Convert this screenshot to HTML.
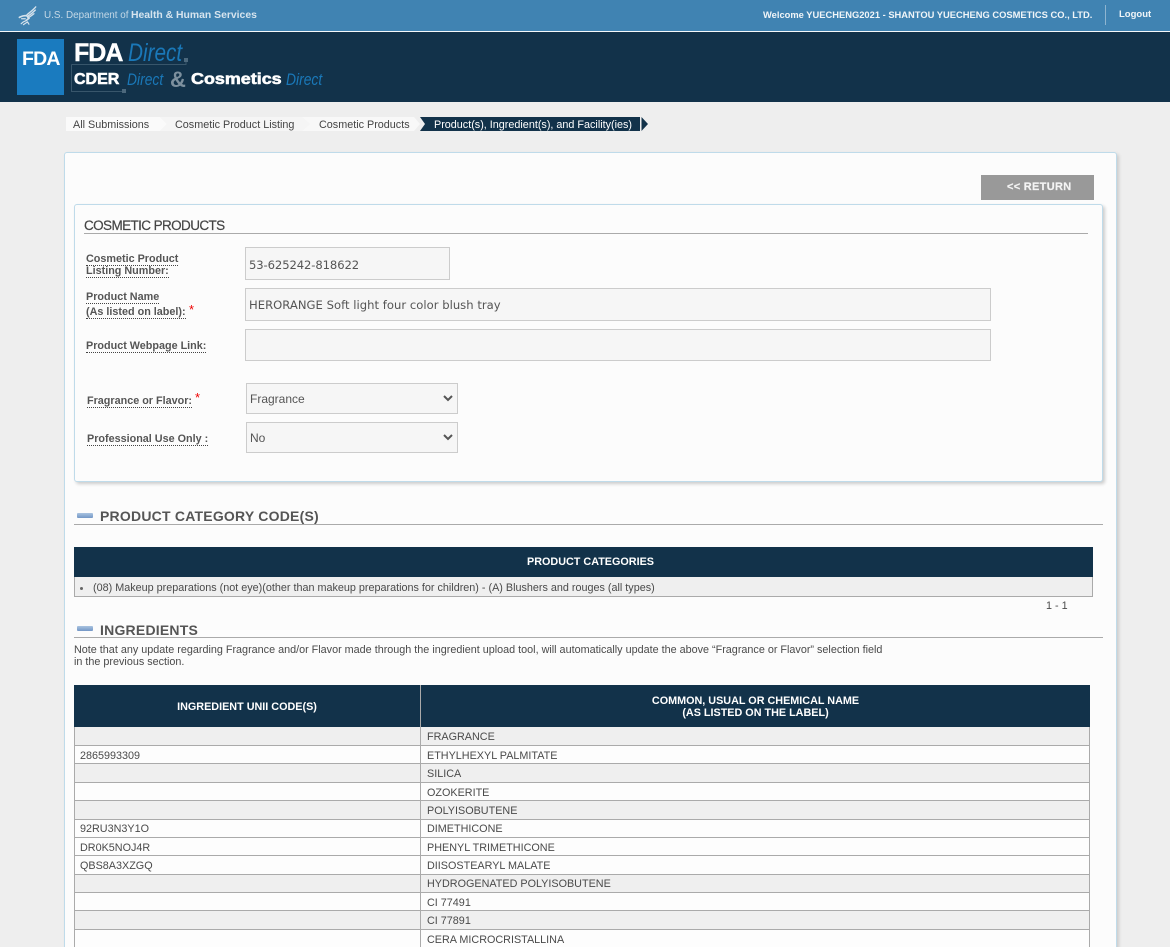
<!DOCTYPE html>
<html lang="en"><head><meta charset="utf-8"><title>Cosmetic Products</title>
<style>
html,body{margin:0;padding:0;width:1170px;height:947px;overflow:hidden;background:#eee;font-family:"Liberation Sans",Arial,sans-serif;color:#4a4a4a}
div,span,svg{position:absolute;white-space:nowrap;box-sizing:border-box}
#page{left:0;top:0;width:1170px;height:947px;overflow:hidden;background:#eee}
.lbl{font-size:10.8px;font-weight:bold;line-height:12px;color:#555}
.lbl i{position:static;font-style:normal;border-bottom:1px dotted #444}
.star{color:#e00;font-size:13px;font-weight:normal}
.in{background:#f6f6f6;border:1px solid #ccc}
.it{font-family:"DejaVu Sans",sans-serif;font-size:11.6px;color:#555;line-height:14px}
.sel{font-size:12px;color:#555;line-height:14px}
.h2{font-size:14px;font-weight:bold;color:#555;letter-spacing:.22px;line-height:16px}
.line{height:1px;background:#aaa}
.minus{left:77px;width:16px;height:5px;background:linear-gradient(#a9c3e0,#7397c6);border-radius:1px}
.row{left:74px;width:1016px;border-left:1px solid #aaa;border-right:1px solid #aaa;border-bottom:1px solid #aaa}
.cell{font-size:10.8px;color:#4a4a4a;line-height:12px}
.th{font-size:10.8px;font-weight:bold;color:#fff;text-align:center;line-height:12px}
.bc{font-size:10.8px;line-height:12px;color:#444}
.w{font-weight:bold;color:#fff;-webkit-text-stroke:.4px #fff;transform-origin:left center}
.d{font-style:italic;color:#1a78b8;transform-origin:left center}
</style></head><body><div id="page">
<div style="left:0;top:0;width:1170px;height:31px;background:#4083b2"></div>
<div style="left:0;top:31px;width:1170px;height:1px;background:#f4f8fa"></div>
<div style="left:0;top:32px;width:1170px;height:70px;background:#12324a"></div>

<svg style="left:18px;top:5px" width="20" height="22" viewBox="0 0 22 22"><g fill="none" stroke="#d5e2ec" stroke-linecap="round"><path d="M19.500 1C17 4 13 7 10 9.500" stroke-width="1.500"/><path d="M19 4.500C16.500 7 13.500 9.500 10.500 11.500" stroke-width="1.500"/><path d="M17.500 8.500C15 10.500 13 12 11 13" stroke-width="1.500"/><path d="M1.500 12.500C4 11 7 10.500 9.500 10.500L12 13.500L9 16" stroke-width="1.800"/><path d="M4 14L8 14M3.500 19.500C5.500 17.500 7.500 16.500 9 16M6 20.500L10.500 17.500L12 20" stroke-width="1.300"/></g></svg>
<span style="left:44px;top:9px;font-size:9.9px;line-height:14px;color:#c4d8e6">U.S. Department of</span>
<span style="left:131px;top:9px;font-size:10.4px;line-height:14px;font-weight:bold;color:#d6e4ee">Health &amp; Human Services</span>
<span style="left:763px;top:9px;font-size:9.35px;line-height:12px;font-weight:bold;color:#f0f5f8">Welcome YUECHENG2021 - SHANTOU YUECHENG COSMETICS CO., LTD.</span>
<div style="left:1105px;top:5px;width:1px;height:20px;background:#8fb5d0"></div>
<span style="left:1119px;top:9px;font-size:9.5px;line-height:12px;font-weight:bold;color:#f0f5f8">Logout</span>

<div style="left:17px;top:39px;width:47px;height:56px;background:#1a7bbf"></div>
<span style="left:22px;top:49px;font-size:19.5px;line-height:20px;font-weight:bold;color:#fff;letter-spacing:-.8px">FDA</span>
<span class="w" style="left:74px;top:40px;font-size:25px;line-height:26px;letter-spacing:-1px">FDA</span>
<span class="d" style="left:128px;top:40px;font-size:25px;line-height:26px;transform:scaleX(.83)">Direct</span>
<svg style="left:70px;top:58px" width="120" height="36" viewBox="0 0 120 36"><path d="M1.500 6.500V33.500H53M1.500 6.500H116V2" fill="none" stroke="#38566b" stroke-width="1"/><rect x="52" y="31" width="4" height="4" fill="#4c687c"/><rect x="114" y="0" width="4" height="4" fill="#4c687c"/></svg>
<span class="w" style="left:74px;top:71px;font-size:16px;line-height:18px;-webkit-text-stroke:.6px #fff">CDER</span>
<span class="d" style="left:127px;top:71px;font-size:16.5px;line-height:18px;transform:scaleX(.84)">Direct</span>
<span style="left:170px;top:68px;font-size:22px;line-height:24px;font-weight:bold;color:#7d909e">&amp;</span>
<span class="w" style="left:191px;top:71px;font-size:16px;line-height:18px;-webkit-text-stroke:.6px #fff;transform:scaleX(1.12)">Cosmetics</span>
<span class="d" style="left:286px;top:71px;font-size:16.5px;line-height:18px;transform:scaleX(.84)">Direct</span>

<svg style="left:66px;top:117px" width="590" height="15" viewBox="0 0 590 15"><polygon points="0,0 94,0 101,7 94,14 0,14" fill="#fafafa"/><polygon points="94,0 236,0 244,7 236,14 94,14 101,7" fill="#f5f5f5"/><polygon points="236,0 348,0 354,7 348,14 236,14 244,7" fill="#f8f8f8"/><polygon points="354,0 574,0 574,14 354,14 359,7" fill="#12324a"/><polygon points="575.500,0 582,7 575.500,14" fill="#12324a"/></svg>
<span class="bc" style="left:73px;top:119px">All Submissions</span>
<span class="bc" style="left:175px;top:119px">Cosmetic Product Listing</span>
<span class="bc" style="left:319px;top:119px">Cosmetic Products</span>
<span class="bc" style="left:434px;top:119px;color:#fff">Product(s), Ingredient(s), and Facility(ies)</span>

<div style="left:64px;top:152px;width:1053px;height:830px;background:#fcfcfc;border:1px solid #bfdbea;border-radius:3px;box-shadow:2px 2px 3px #ccc"></div>
<div style="left:981px;top:175px;width:113px;height:25px;background:#999"></div>
<span style="left:1007px;top:181px;font-size:11px;line-height:13px;font-weight:bold;color:#f4f4f4;letter-spacing:.3px;-webkit-text-stroke:.2px #f4f4f4">&lt;&lt; RETURN</span>

<div style="left:74px;top:204px;width:1029px;height:278px;background:#fcfcfc;border:1px solid #bfdbea;border-radius:3px;box-shadow:2px 2px 3px #ccc"></div>
<span style="left:84px;top:218px;font-size:13.5px;line-height:16px;color:#444;letter-spacing:-.6px;-webkit-text-stroke:.2px #444">COSMETIC PRODUCTS</span>
<div class="line" style="left:84px;top:233px;width:1004px"></div>

<span class="lbl" style="left:86px;top:253px"><i>Cosmetic Product</i></span>
<span class="lbl" style="left:86px;top:265px"><i>Listing Number:</i></span>
<div class="in" style="left:245px;top:247px;width:205px;height:33px"></div>
<span class="it" style="left:249px;top:258px;letter-spacing:-.1px">53-625242-818622</span>
<span class="lbl" style="left:86px;top:291px"><i>Product Name</i></span>
<span class="lbl" style="left:86px;top:306px"><i>(As listed on label):</i></span>
<span class="star" style="left:189px;top:303px;line-height:14px">*</span>
<div class="in" style="left:245px;top:288px;width:746px;height:33px"></div>
<span class="it" style="left:249px;top:298px;letter-spacing:.02px">HERORANGE Soft light four color blush tray</span>
<span class="lbl" style="left:86px;top:340px"><i>Product Webpage Link:</i></span>
<div class="in" style="left:245px;top:329px;width:746px;height:32px"></div>
<span class="lbl" style="left:87px;top:395px"><i>Fragrance or Flavor:</i></span>
<span class="star" style="left:195px;top:391px;line-height:14px">*</span>
<div class="in" style="left:246px;top:383px;width:212px;height:31px"></div>
<span class="sel" style="left:250px;top:392px">Fragrance</span>
<svg style="left:442px;top:394px" width="12" height="9" viewBox="0 0 12 9"><path d="M2 2L6 6L10 2" fill="none" stroke="#555" stroke-width="2"/></svg>
<span class="lbl" style="left:87px;top:433px"><i>Professional Use Only :</i></span>
<div class="in" style="left:246px;top:422px;width:212px;height:31px"></div>
<span class="sel" style="left:250px;top:431px">No</span>
<svg style="left:442px;top:433px" width="12" height="9" viewBox="0 0 12 9"><path d="M2 2L6 6L10 2" fill="none" stroke="#555" stroke-width="2"/></svg>

<div class="minus" style="top:513px"></div>
<span class="h2" style="left:100px;top:508px">PRODUCT CATEGORY CODE(S)</span>
<div class="line" style="left:74px;top:524px;width:1029px"></div>
<div style="left:74px;top:547px;width:1019px;height:30px;background:#12324a"></div>
<span class="th" style="left:74px;top:556px;width:1033px">PRODUCT CATEGORIES</span>
<div style="left:74px;top:577px;width:1019px;height:20px;background:#efefef;border:1px solid #aaa;border-top:0"></div>
<div style="left:80px;top:587px;width:3px;height:3px;border-radius:50%;background:#666"></div>
<span class="cell" style="left:93px;top:582px">(08) Makeup preparations (not eye)(other than makeup preparations for children) - (A) Blushers and rouges (all types)</span>
<span class="cell" style="left:1046px;top:600px">1 - 1</span>

<div class="minus" style="top:626px"></div>
<span class="h2" style="left:100px;top:622px">INGREDIENTS</span>
<div class="line" style="left:74px;top:637px;width:1029px"></div>
<span class="cell" style="left:74px;top:644px">Note that any update regarding Fragrance and/or Flavor made through the ingredient upload tool, will automatically update the above “Fragrance or Flavor” selection field</span>
<span class="cell" style="left:74px;top:656px">in the previous section.</span>

<div style="left:74px;top:685px;width:1016px;height:42px;background:#12324a"></div>
<span class="th" style="left:74px;top:701px;width:346px">INGREDIENT UNII CODE(S)</span>
<span class="th" style="left:421px;top:695px;width:669px">COMMON, USUAL OR CHEMICAL NAME<br>(AS LISTED ON THE LABEL)</span>

<div class="row" style="top:727px;height:19px;background:#efefef"></div>
<div class="row" style="top:746px;height:18px;background:#fdfdfd"></div>
<div class="row" style="top:764px;height:19px;background:#efefef"></div>
<div class="row" style="top:783px;height:18px;background:#fdfdfd"></div>
<div class="row" style="top:801px;height:19px;background:#efefef"></div>
<div class="row" style="top:820px;height:18px;background:#fdfdfd"></div>
<div class="row" style="top:838px;height:18px;background:#fdfdfd"></div>
<div class="row" style="top:856px;height:19px;background:#fdfdfd"></div>
<div class="row" style="top:875px;height:18px;background:#efefef"></div>
<div class="row" style="top:893px;height:18px;background:#fdfdfd"></div>
<div class="row" style="top:911px;height:19px;background:#efefef"></div>
<div class="row" style="top:930px;height:19px;background:#fdfdfd"></div>
<div style="left:420px;top:685px;width:1px;height:262px;background:#aaa"></div>

<span class="cell" style="left:427px;top:731px">FRAGRANCE</span>
<span class="cell" style="left:80px;top:750px">2865993309</span><span class="cell" style="left:427px;top:750px">ETHYLHEXYL PALMITATE</span>
<span class="cell" style="left:427px;top:768px">SILICA</span>
<span class="cell" style="left:427px;top:787px">OZOKERITE</span>
<span class="cell" style="left:427px;top:805px">POLYISOBUTENE</span>
<span class="cell" style="left:80px;top:823px">92RU3N3Y1O</span><span class="cell" style="left:427px;top:823px">DIMETHICONE</span>
<span class="cell" style="left:80px;top:842px">DR0K5NOJ4R</span><span class="cell" style="left:427px;top:842px">PHENYL TRIMETHICONE</span>
<span class="cell" style="left:80px;top:860px">QBS8A3XZGQ</span><span class="cell" style="left:427px;top:860px">DIISOSTEARYL MALATE</span>
<span class="cell" style="left:427px;top:878px">HYDROGENATED POLYISOBUTENE</span>
<span class="cell" style="left:427px;top:897px">CI 77491</span>
<span class="cell" style="left:427px;top:915px">CI 77891</span>
<span class="cell" style="left:427px;top:934px">CERA MICROCRISTALLINA</span>
</div></body></html>
